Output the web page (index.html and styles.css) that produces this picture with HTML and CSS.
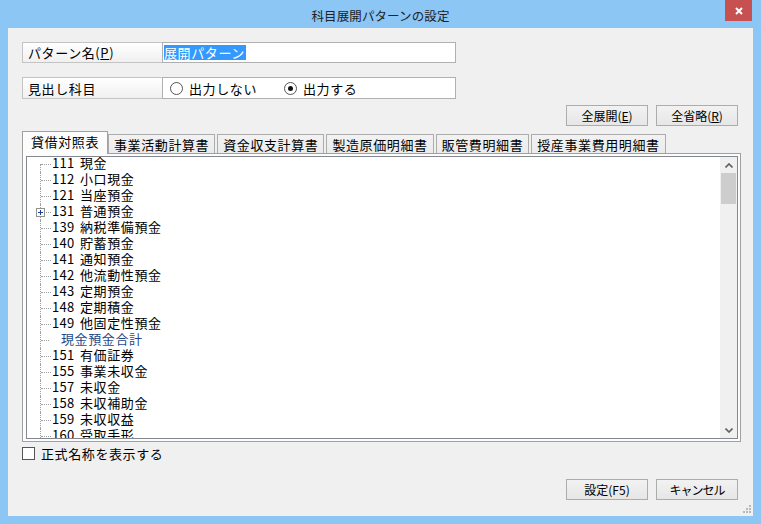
FILE: index.html
```html
<!DOCTYPE html>
<html lang="ja">
<head>
    <meta charset="UTF-8">
    <meta name="viewport" content="width=device-width, initial-scale=1.0">
    <title>科目展開パターンの設定</title>
    <link rel="stylesheet" href="styles.css">
</head>
<body>
    <div class="window">
        <div class="titlebar">
            <span class="title">科目展開パターンの設定</span>
            <button class="close-btn" title="閉じる">
                <svg width="10" height="10" viewBox="0 0 10 10"><path d="M2 2 L8 8 M8 2 L2 8" stroke="#fff" stroke-width="2"/></svg>
            </button>
        </div>

        <div class="client">
            <!-- パターン名 -->
            <div class="field-row">
                <div class="field-label">パターン名(<u>P</u>)</div>
                <div class="field-input"><span class="selected">展開パターン</span></div>
            </div>

            <!-- 見出し科目 -->
            <div class="field-row row-radio">
                <div class="field-label">見出し科目</div>
                <div class="field-input radios">
                    <label class="radio"><span class="radio-dot"></span>出力しない</label>
                    <label class="radio checked"><span class="radio-dot"></span>出力する</label>
                </div>
            </div>

            <div class="button-row top-buttons">
                <button class="btn">全展開(<u>E</u>)</button>
                <button class="btn">全省略(<u>R</u>)</button>
            </div>

            <!-- タブ -->
            <div class="tabs">
                <div class="tab active">貸借対照表</div>
                <div class="tab first-after">事業活動計算書</div>
                <div class="tab">資金収支計算書</div>
                <div class="tab">製造原価明細書</div>
                <div class="tab">販管費明細書</div>
                <div class="tab">授産事業費用明細書</div>
            </div>

            <div class="tab-panel">
                <div class="tree">
                    <div class="tree-list">
                        <div class="tree-row first"><span class="branch"></span><span class="code">111</span><span class="name">現金</span></div>
                        <div class="tree-row"><span class="branch"></span><span class="code">112</span><span class="name">小口現金</span></div>
                        <div class="tree-row"><span class="branch"></span><span class="code">121</span><span class="name">当座預金</span></div>
                        <div class="tree-row"><span class="branch"><span class="expander"></span></span><span class="code">131</span><span class="name">普通預金</span></div>
                        <div class="tree-row"><span class="branch"></span><span class="code">139</span><span class="name">納税準備預金</span></div>
                        <div class="tree-row"><span class="branch"></span><span class="code">140</span><span class="name">貯蓄預金</span></div>
                        <div class="tree-row"><span class="branch"></span><span class="code">141</span><span class="name">通知預金</span></div>
                        <div class="tree-row"><span class="branch"></span><span class="code">142</span><span class="name">他流動性預金</span></div>
                        <div class="tree-row"><span class="branch"></span><span class="code">143</span><span class="name">定期預金</span></div>
                        <div class="tree-row"><span class="branch"></span><span class="code">148</span><span class="name">定期積金</span></div>
                        <div class="tree-row"><span class="branch"></span><span class="code">149</span><span class="name">他固定性預金</span></div>
                        <div class="tree-row total"><span class="branch short"></span><span class="name">現金預金合計</span></div>
                        <div class="tree-row"><span class="branch"></span><span class="code">151</span><span class="name">有価証券</span></div>
                        <div class="tree-row"><span class="branch"></span><span class="code">155</span><span class="name">事業未収金</span></div>
                        <div class="tree-row"><span class="branch"></span><span class="code">157</span><span class="name">未収金</span></div>
                        <div class="tree-row"><span class="branch"></span><span class="code">158</span><span class="name">未収補助金</span></div>
                        <div class="tree-row"><span class="branch"></span><span class="code">159</span><span class="name">未収収益</span></div>
                        <div class="tree-row"><span class="branch"></span><span class="code">160</span><span class="name">受取手形</span></div>
                    </div>
                    <div class="scrollbar">
                        <div class="scroll-arrow">
                            <svg width="8" height="5" viewBox="0 0 8 5"><path d="M0.5 4.5 L4 1 L7.5 4.5" stroke="#606060" stroke-width="1.6" fill="none"/></svg>
                        </div>
                        <div class="scroll-track"><div class="scroll-thumb"></div></div>
                        <div class="scroll-arrow">
                            <svg width="8" height="5" viewBox="0 0 8 5"><path d="M0.5 0.5 L4 4 L7.5 0.5" stroke="#606060" stroke-width="1.6" fill="none"/></svg>
                        </div>
                    </div>
                </div>
            </div>

            <label class="check-row"><span class="checkbox"></span>正式名称を表示する</label>

            <div class="button-row bottom-buttons">
                <button class="btn">設定(F5)</button>
                <button class="btn btn-narrow">キャンセル</button>
            </div>

            <svg class="grip" width="8" height="8" viewBox="0 0 8 8">
                <rect x="6" y="0" width="2" height="2" fill="#b8b8b8"/>
                <rect x="3" y="3" width="2" height="2" fill="#b8b8b8"/>
                <rect x="6" y="3" width="2" height="2" fill="#b8b8b8"/>
                <rect x="0" y="6" width="2" height="2" fill="#b8b8b8"/>
                <rect x="3" y="6" width="2" height="2" fill="#b8b8b8"/>
                <rect x="6" y="6" width="2" height="2" fill="#b8b8b8"/>
            </svg>
        </div>
    </div>
</body>
</html>
```

FILE: styles.css
```css
:root {
    --frame-color: #8cc6f5;
    --face-color: #f0f0f0;
    --line-color: #acacac;
    --text-color: #000;
}

* {
    box-sizing: border-box;
}

body {
    margin: 0;
    font-family: "Noto Sans CJK JP", "Noto Sans", sans-serif;
    font-size: 13px;
    color: var(--text-color);
    background: #fff;
}

.window {
    width: 761px;
    height: 524px;
    background: var(--frame-color);
    display: flex;
    flex-direction: column;
}

.titlebar {
    height: 28px;
    display: flex;
    justify-content: center;
    align-items: center;
    position: relative;
}

.title {
    font-size: 12.5px;
    color: #222;
    letter-spacing: 0.1px;
    margin-top: 2px;
}

.close-btn {
    position: absolute;
    top: 0;
    right: 9px;
    width: 27px;
    height: 21px;
    border: none;
    padding: 0;
    background: #c75050;
    display: flex;
    align-items: center;
    justify-content: center;
}

.client {
    flex: 1;
    margin: 0 8px 8px 8px;
    background: var(--face-color);
    padding: 14px 12px 0 14px;
    display: flex;
    flex-direction: column;
    position: relative;
    letter-spacing: 0.6px;
}

/* labelled fields */
.field-row {
    display: flex;
    height: 21px;
}

.row-radio {
    margin-top: 14px;
    height: 22px;
}

.field-label {
    width: 141px;
    border: 1px solid #c4c4c4;
    background: linear-gradient(#ffffff, #f0f0f0);
    padding-left: 5px;
    display: flex;
    align-items: center;
}

.field-input {
    width: 294px;
    margin-left: -1px;
    border: 1px solid #b0b0b0;
    background: #fff;
    display: flex;
    align-items: center;
    padding-left: 1px;
}

.selected {
    background: #3399ff;
    color: #fff;
    height: 15px;
    line-height: 15px;
    padding-right: 1px;
}

.radios {
    padding-left: 7px;
}

.radio {
    display: flex;
    align-items: center;
    margin-right: 27px;
}

.radio-dot {
    width: 13px;
    height: 13px;
    border: 1px solid #555;
    border-radius: 50%;
    background: #fff;
    margin-right: 6px;
    display: flex;
    align-items: center;
    justify-content: center;
}

.radio.checked .radio-dot::after {
    content: "";
    width: 5px;
    height: 5px;
    border-radius: 50%;
    background: #111;
}

/* buttons */
.button-row {
    display: flex;
    justify-content: flex-end;
    gap: 8px;
    padding-right: 3px;
}

.top-buttons {
    margin-top: 6px;
}

.bottom-buttons {
    margin-top: 17px;
}

.btn {
    width: 82px;
    height: 21px;
    border: 1px solid var(--line-color);
    background: linear-gradient(#f2f2f2, #e6e6e6);
    font-family: inherit;
    font-size: 12px;
    letter-spacing: 0;
    padding: 0;
    color: #000;
}

.btn-narrow {
    letter-spacing: -1px;
}

/* tabs */
.tabs {
    display: flex;
    align-items: flex-end;
    margin-top: 5px;
    height: 22px;
    position: relative;
    z-index: 1;
}

.tab {
    height: 19px;
    border: 1px solid var(--line-color);
    border-bottom: none;
    background: linear-gradient(#f2f2f2, #ebebeb);
    padding: 0 5px;
    margin-left: 2px;
    display: flex;
    align-items: center;
    white-space: nowrap;
}

.tab.active {
    height: 23px;
    margin-left: 0;
    margin-bottom: -1px;
    padding: 0 8px 3px 8px;
    background: #fcfcfc;
    border-color: #a0a0a0;
}

.tab.first-after {
    margin-left: 0;
}

.tab-panel {
    height: 289px;
    border: 1px solid #a0a0a0;
    background: #fcfcfc;
    padding: 2px 2px 2px 3px;
}

.tree {
    height: 100%;
    border: 1px solid #828790;
    background: #fff;
    display: flex;
}

.tree-list {
    flex: 1;
    overflow: hidden;
    padding-left: 13px;
}

.tree-row {
    display: flex;
    height: 16px;
    line-height: 16px;
    white-space: nowrap;
}

.tree-row .code,
.tree-row .name {
    position: relative;
    top: -2px;
}

.branch {
    width: 12px;
    height: 16px;
    position: relative;
    top: -1px;
    flex: none;
}

.branch::before {
    content: "";
    position: absolute;
    left: 0;
    top: 0;
    bottom: 0;
    border-left: 1px dotted #a0a0a0;
}

.tree-row.first .branch::before {
    top: 8px;
}

.branch::after {
    content: "";
    position: absolute;
    left: 1px;
    top: 8px;
    width: 10px;
    border-top: 1px dotted #a0a0a0;
}

.branch.short {
    width: 19px;
}

.branch.short::after {
    width: 8px;
}

.expander {
    position: absolute;
    left: -4px;
    top: 4px;
    width: 9px;
    height: 9px;
    border: 1px solid #919191;
    background: #fff;
    z-index: 1;
}

.expander::before,
.expander::after {
    content: "";
    position: absolute;
    background: #1e3f99;
}

.expander::before {
    left: 1px;
    top: 3px;
    width: 5px;
    height: 1px;
}

.expander::after {
    left: 3px;
    top: 1px;
    width: 1px;
    height: 5px;
}

.code {
    width: 28px;
    flex: none;
    letter-spacing: 0.3px;
}

.tree-row.total .name {
    color: #1f4a8a;
    padding-left: 2px;
}

.scrollbar {
    width: 17px;
    background: #f0f0f0;
    display: flex;
    flex-direction: column;
}

.scroll-arrow {
    height: 16px;
    display: flex;
    align-items: center;
    justify-content: center;
}

.scroll-track {
    flex: 1;
    padding: 0 1px;
}

.scroll-thumb {
    height: 31px;
    background: #cdcdcd;
}

/* checkbox */
.check-row {
    display: flex;
    align-items: center;
    margin-top: 3px;
    height: 16px;
}

.checkbox {
    width: 13px;
    height: 13px;
    border: 1px solid #555;
    background: #fff;
    margin-right: 6px;
}

.bottom-buttons {
    margin-top: 18px;
}

.grip {
    position: absolute;
    right: 2px;
    bottom: 3px;
}
```
